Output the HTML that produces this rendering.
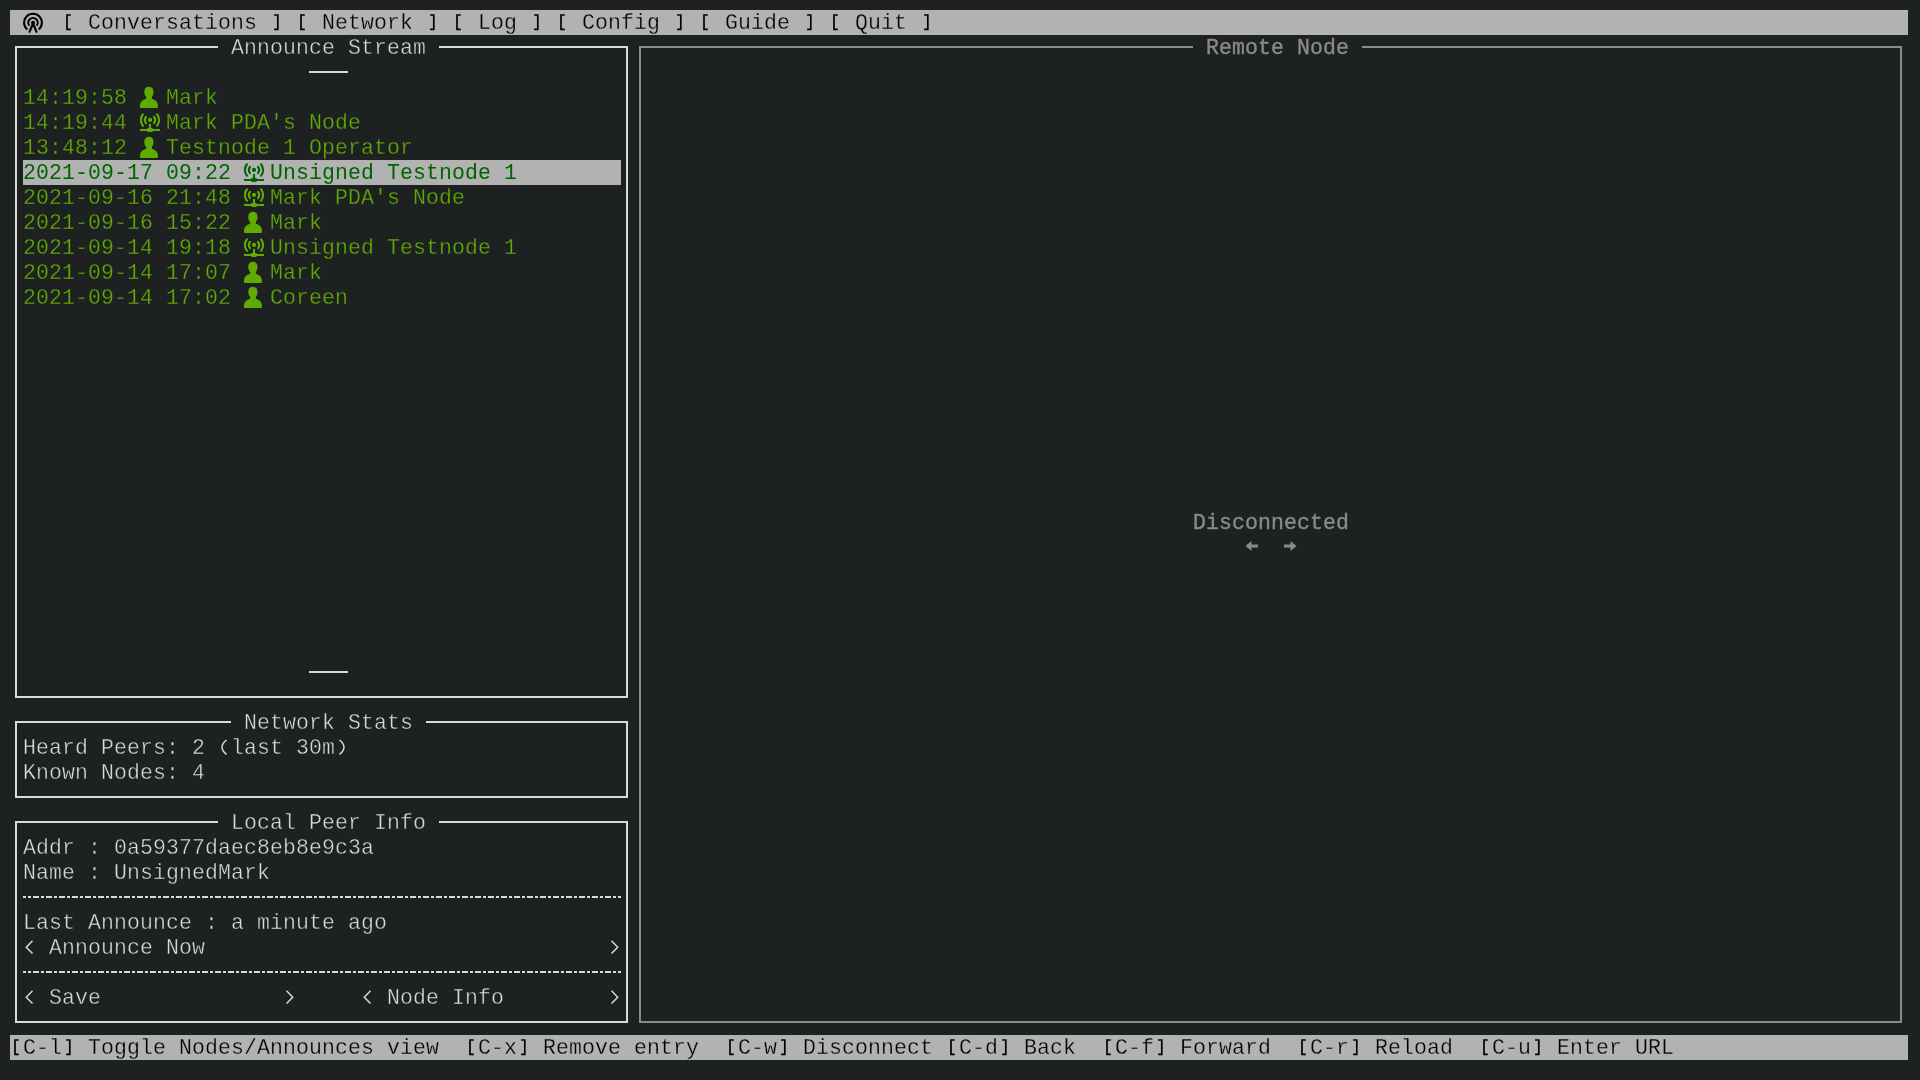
<!DOCTYPE html>
<html><head><meta charset="utf-8"><style>
html,body{margin:0;padding:0;width:1920px;height:1080px;overflow:hidden;background:#1e2122}
.t{position:absolute;white-space:pre;font-family:"Liberation Mono",monospace;font-size:21.5px;letter-spacing:0.0979px;line-height:25px;height:25px;will-change:transform}
.r{position:absolute}
.dash{background:repeating-linear-gradient(90deg,#dadcd2 0,#dadcd2 3px,transparent 3px,transparent 5px,#dadcd2 5px,#dadcd2 8px,transparent 8px,transparent 10px,#dadcd2 10px,#dadcd2 13px)}
</style></head><body>
<div class="r" style="left:10px;top:10px;width:1898px;height:25px;background:#b2b2b2"></div>
<div class="r" style="left:10px;top:1035px;width:1898px;height:25px;background:#b2b2b2"></div>
<div class="t" style="left:62px;top:11px;color:#000000;-webkit-text-stroke:0.3px #b2b2b2;">  Conversations     Network     Log     Config     Guide     Quit  </div>
<svg class="r" style="left:62px;top:10px" width="13" height="25"><path d="M8.8 5 H5 V19.4 H8.8" fill="none" stroke="#000000" stroke-width="1.70"/></svg>
<svg class="r" style="left:270px;top:10px" width="13" height="25"><path d="M4.1 5 H7.8 V19.4 H4.1" fill="none" stroke="#000000" stroke-width="1.70"/></svg>
<svg class="r" style="left:296px;top:10px" width="13" height="25"><path d="M8.8 5 H5 V19.4 H8.8" fill="none" stroke="#000000" stroke-width="1.70"/></svg>
<svg class="r" style="left:426px;top:10px" width="13" height="25"><path d="M4.1 5 H7.8 V19.4 H4.1" fill="none" stroke="#000000" stroke-width="1.70"/></svg>
<svg class="r" style="left:452px;top:10px" width="13" height="25"><path d="M8.8 5 H5 V19.4 H8.8" fill="none" stroke="#000000" stroke-width="1.70"/></svg>
<svg class="r" style="left:530px;top:10px" width="13" height="25"><path d="M4.1 5 H7.8 V19.4 H4.1" fill="none" stroke="#000000" stroke-width="1.70"/></svg>
<svg class="r" style="left:556px;top:10px" width="13" height="25"><path d="M8.8 5 H5 V19.4 H8.8" fill="none" stroke="#000000" stroke-width="1.70"/></svg>
<svg class="r" style="left:673px;top:10px" width="13" height="25"><path d="M4.1 5 H7.8 V19.4 H4.1" fill="none" stroke="#000000" stroke-width="1.70"/></svg>
<svg class="r" style="left:699px;top:10px" width="13" height="25"><path d="M8.8 5 H5 V19.4 H8.8" fill="none" stroke="#000000" stroke-width="1.70"/></svg>
<svg class="r" style="left:803px;top:10px" width="13" height="25"><path d="M4.1 5 H7.8 V19.4 H4.1" fill="none" stroke="#000000" stroke-width="1.70"/></svg>
<svg class="r" style="left:829px;top:10px" width="13" height="25"><path d="M8.8 5 H5 V19.4 H8.8" fill="none" stroke="#000000" stroke-width="1.70"/></svg>
<svg class="r" style="left:920px;top:10px" width="13" height="25"><path d="M4.1 5 H7.8 V19.4 H4.1" fill="none" stroke="#000000" stroke-width="1.70"/></svg>
<div class="t" style="left:10px;top:1036px;color:#000000;-webkit-text-stroke:0.3px #b2b2b2;"> C-l  Toggle Nodes/Announces view   C-x  Remove entry   C-w  Disconnect  C-d  Back   C-f  Forward   C-r  Reload   C-u  Enter URL</div>
<svg class="r" style="left:10px;top:1035px" width="13" height="25"><path d="M8.8 5 H5 V19.4 H8.8" fill="none" stroke="#000000" stroke-width="1.70"/></svg>
<svg class="r" style="left:62px;top:1035px" width="13" height="25"><path d="M4.1 5 H7.8 V19.4 H4.1" fill="none" stroke="#000000" stroke-width="1.70"/></svg>
<svg class="r" style="left:465px;top:1035px" width="13" height="25"><path d="M8.8 5 H5 V19.4 H8.8" fill="none" stroke="#000000" stroke-width="1.70"/></svg>
<svg class="r" style="left:517px;top:1035px" width="13" height="25"><path d="M4.1 5 H7.8 V19.4 H4.1" fill="none" stroke="#000000" stroke-width="1.70"/></svg>
<svg class="r" style="left:725px;top:1035px" width="13" height="25"><path d="M8.8 5 H5 V19.4 H8.8" fill="none" stroke="#000000" stroke-width="1.70"/></svg>
<svg class="r" style="left:777px;top:1035px" width="13" height="25"><path d="M4.1 5 H7.8 V19.4 H4.1" fill="none" stroke="#000000" stroke-width="1.70"/></svg>
<svg class="r" style="left:946px;top:1035px" width="13" height="25"><path d="M8.8 5 H5 V19.4 H8.8" fill="none" stroke="#000000" stroke-width="1.70"/></svg>
<svg class="r" style="left:998px;top:1035px" width="13" height="25"><path d="M4.1 5 H7.8 V19.4 H4.1" fill="none" stroke="#000000" stroke-width="1.70"/></svg>
<svg class="r" style="left:1102px;top:1035px" width="13" height="25"><path d="M8.8 5 H5 V19.4 H8.8" fill="none" stroke="#000000" stroke-width="1.70"/></svg>
<svg class="r" style="left:1154px;top:1035px" width="13" height="25"><path d="M4.1 5 H7.8 V19.4 H4.1" fill="none" stroke="#000000" stroke-width="1.70"/></svg>
<svg class="r" style="left:1297px;top:1035px" width="13" height="25"><path d="M8.8 5 H5 V19.4 H8.8" fill="none" stroke="#000000" stroke-width="1.70"/></svg>
<svg class="r" style="left:1349px;top:1035px" width="13" height="25"><path d="M4.1 5 H7.8 V19.4 H4.1" fill="none" stroke="#000000" stroke-width="1.70"/></svg>
<svg class="r" style="left:1479px;top:1035px" width="13" height="25"><path d="M8.8 5 H5 V19.4 H8.8" fill="none" stroke="#000000" stroke-width="1.70"/></svg>
<svg class="r" style="left:1531px;top:1035px" width="13" height="25"><path d="M4.1 5 H7.8 V19.4 H4.1" fill="none" stroke="#000000" stroke-width="1.70"/></svg>
<svg class="r" style="left:23px;top:10px" width="26" height="25" viewBox="0 0 26 25">
<g fill="none" stroke="#000" stroke-width="2.1">
<path d="M4.28 19.46 A8.9 8.9 0 1 1 15.72 19.46"/>
<path d="M6.4 15.66 A4.7 4.7 0 1 1 13.6 15.66"/>
<path d="M10 13.5 L6.2 22.6 M10 13.5 L13.8 22.6"/>
</g><circle cx="10" cy="12.64" r="1.9" fill="#000"/></svg>
<div class="r" style="left:15px;top:46px;width:2px;height:652px;background:#dadcd2"></div>
<div class="r" style="left:626px;top:46px;width:2px;height:652px;background:#dadcd2"></div>
<div class="r" style="left:15px;top:696px;width:613px;height:2px;background:#dadcd2"></div>
<div class="r" style="left:15px;top:46px;width:203px;height:2px;background:#dadcd2"></div>
<div class="r" style="left:439px;top:46px;width:189px;height:2px;background:#dadcd2"></div>
<div class="t" style="left:231px;top:36px;color:#dadcd2;-webkit-text-stroke:0.4px #1e2122;">Announce Stream</div>
<div class="r" style="left:15px;top:721px;width:2px;height:77px;background:#dadcd2"></div>
<div class="r" style="left:626px;top:721px;width:2px;height:77px;background:#dadcd2"></div>
<div class="r" style="left:15px;top:796px;width:613px;height:2px;background:#dadcd2"></div>
<div class="r" style="left:15px;top:721px;width:216px;height:2px;background:#dadcd2"></div>
<div class="r" style="left:426px;top:721px;width:202px;height:2px;background:#dadcd2"></div>
<div class="t" style="left:244px;top:711px;color:#dadcd2;-webkit-text-stroke:0.4px #1e2122;">Network Stats</div>
<div class="r" style="left:15px;top:821px;width:2px;height:202px;background:#dadcd2"></div>
<div class="r" style="left:626px;top:821px;width:2px;height:202px;background:#dadcd2"></div>
<div class="r" style="left:15px;top:1021px;width:613px;height:2px;background:#dadcd2"></div>
<div class="r" style="left:15px;top:821px;width:203px;height:2px;background:#dadcd2"></div>
<div class="r" style="left:439px;top:821px;width:189px;height:2px;background:#dadcd2"></div>
<div class="t" style="left:231px;top:811px;color:#dadcd2;-webkit-text-stroke:0.4px #1e2122;">Local Peer Info</div>
<div class="r" style="left:639px;top:46px;width:2px;height:977px;background:#8a8a8a"></div>
<div class="r" style="left:1900px;top:46px;width:2px;height:977px;background:#8a8a8a"></div>
<div class="r" style="left:639px;top:1021px;width:1263px;height:2px;background:#8a8a8a"></div>
<div class="r" style="left:639px;top:46px;width:554px;height:2px;background:#8a8a8a"></div>
<div class="r" style="left:1362px;top:46px;width:540px;height:2px;background:#8a8a8a"></div>
<div class="t" style="left:1206px;top:36px;color:#8a8a8a;-webkit-text-stroke:0.35px #8a8a8a;">Remote Node</div>
<div class="r" style="left:309px;top:71px;width:39px;height:2px;background:#dadcd2"></div>
<div class="r" style="left:309px;top:671px;width:39px;height:2px;background:#dadcd2"></div>
<div class="r" style="left:23px;top:160px;width:598px;height:25px;background:#b2b2b2"></div>
<div class="t" style="left:23px;top:86px;color:#60ab02;-webkit-text-stroke:0.3px #1e2122;">14:19:58</div>
<svg class="r" style="left:140px;top:85px" width="26" height="25" viewBox="0 0 26 25"><g fill="#60ab02">
<path d="M4.3 6.8 C4.3 3.4 6.3 1.85 8.9 1.85 C11.5 1.85 13.5 3.4 13.5 6.8 C13.5 10.2 12.5 12.6 8.9 12.6 C5.3 12.6 4.3 10.2 4.3 6.8 Z"/>
<rect x="6.1" y="10" width="5.8" height="5"/>
<path d="M0.5 23 Q0 23 0 22 L0 20.5 C0 16.5 3.5 14.3 6.5 13.8 L11.4 13.8 C14.4 14.3 17.9 16.5 17.9 20.5 L17.9 22 Q17.9 23 17.4 23 Z"/>
</g></svg>
<div class="t" style="left:166px;top:86px;color:#60ab02;-webkit-text-stroke:0.3px #1e2122;">Mark</div>
<div class="t" style="left:23px;top:111px;color:#60ab02;-webkit-text-stroke:0.3px #1e2122;">14:19:44</div>
<svg class="r" style="left:140px;top:110px" width="26" height="25" viewBox="0 0 26 25"><g fill="none" stroke="#60ab02" stroke-width="2.1" stroke-linecap="round">
<path d="M2.93 4.27 A9.1 9.1 0 0 0 2.93 15.73"/>
<path d="M17.07 4.27 A9.1 9.1 0 0 1 17.07 15.73"/>
<path d="M5.93 6.93 A5.1 5.1 0 0 0 5.93 13.07"/>
<path d="M14.07 6.93 A5.1 5.1 0 0 1 14.07 13.07"/>
</g><g fill="#60ab02"><circle cx="10" cy="9.95" r="2.1"/><rect x="8.95" y="13.9" width="2.1" height="6"/>
<rect x="0" y="19" width="20" height="2"/><rect x="6.9" y="17.9" width="6.1" height="4" rx="1.3"/></g></svg>
<div class="t" style="left:166px;top:111px;color:#60ab02;-webkit-text-stroke:0.3px #1e2122;">Mark PDA's Node</div>
<div class="t" style="left:23px;top:136px;color:#60ab02;-webkit-text-stroke:0.3px #1e2122;">13:48:12</div>
<svg class="r" style="left:140px;top:135px" width="26" height="25" viewBox="0 0 26 25"><g fill="#60ab02">
<path d="M4.3 6.8 C4.3 3.4 6.3 1.85 8.9 1.85 C11.5 1.85 13.5 3.4 13.5 6.8 C13.5 10.2 12.5 12.6 8.9 12.6 C5.3 12.6 4.3 10.2 4.3 6.8 Z"/>
<rect x="6.1" y="10" width="5.8" height="5"/>
<path d="M0.5 23 Q0 23 0 22 L0 20.5 C0 16.5 3.5 14.3 6.5 13.8 L11.4 13.8 C14.4 14.3 17.9 16.5 17.9 20.5 L17.9 22 Q17.9 23 17.4 23 Z"/>
</g></svg>
<div class="t" style="left:166px;top:136px;color:#60ab02;-webkit-text-stroke:0.3px #1e2122;">Testnode 1 Operator</div>
<div class="t" style="left:23px;top:161px;color:#006400;">2021-09-17 09:22</div>
<svg class="r" style="left:244px;top:160px" width="26" height="25" viewBox="0 0 26 25"><g fill="none" stroke="#006400" stroke-width="2.1" stroke-linecap="round">
<path d="M2.93 4.27 A9.1 9.1 0 0 0 2.93 15.73"/>
<path d="M17.07 4.27 A9.1 9.1 0 0 1 17.07 15.73"/>
<path d="M5.93 6.93 A5.1 5.1 0 0 0 5.93 13.07"/>
<path d="M14.07 6.93 A5.1 5.1 0 0 1 14.07 13.07"/>
</g><g fill="#006400"><circle cx="10" cy="9.95" r="2.1"/><rect x="8.95" y="13.9" width="2.1" height="6"/>
<rect x="0" y="19" width="20" height="2"/><rect x="6.9" y="17.9" width="6.1" height="4" rx="1.3"/></g></svg>
<div class="t" style="left:270px;top:161px;color:#006400;">Unsigned Testnode 1</div>
<div class="t" style="left:23px;top:186px;color:#60ab02;-webkit-text-stroke:0.3px #1e2122;">2021-09-16 21:48</div>
<svg class="r" style="left:244px;top:185px" width="26" height="25" viewBox="0 0 26 25"><g fill="none" stroke="#60ab02" stroke-width="2.1" stroke-linecap="round">
<path d="M2.93 4.27 A9.1 9.1 0 0 0 2.93 15.73"/>
<path d="M17.07 4.27 A9.1 9.1 0 0 1 17.07 15.73"/>
<path d="M5.93 6.93 A5.1 5.1 0 0 0 5.93 13.07"/>
<path d="M14.07 6.93 A5.1 5.1 0 0 1 14.07 13.07"/>
</g><g fill="#60ab02"><circle cx="10" cy="9.95" r="2.1"/><rect x="8.95" y="13.9" width="2.1" height="6"/>
<rect x="0" y="19" width="20" height="2"/><rect x="6.9" y="17.9" width="6.1" height="4" rx="1.3"/></g></svg>
<div class="t" style="left:270px;top:186px;color:#60ab02;-webkit-text-stroke:0.3px #1e2122;">Mark PDA's Node</div>
<div class="t" style="left:23px;top:211px;color:#60ab02;-webkit-text-stroke:0.3px #1e2122;">2021-09-16 15:22</div>
<svg class="r" style="left:244px;top:210px" width="26" height="25" viewBox="0 0 26 25"><g fill="#60ab02">
<path d="M4.3 6.8 C4.3 3.4 6.3 1.85 8.9 1.85 C11.5 1.85 13.5 3.4 13.5 6.8 C13.5 10.2 12.5 12.6 8.9 12.6 C5.3 12.6 4.3 10.2 4.3 6.8 Z"/>
<rect x="6.1" y="10" width="5.8" height="5"/>
<path d="M0.5 23 Q0 23 0 22 L0 20.5 C0 16.5 3.5 14.3 6.5 13.8 L11.4 13.8 C14.4 14.3 17.9 16.5 17.9 20.5 L17.9 22 Q17.9 23 17.4 23 Z"/>
</g></svg>
<div class="t" style="left:270px;top:211px;color:#60ab02;-webkit-text-stroke:0.3px #1e2122;">Mark</div>
<div class="t" style="left:23px;top:236px;color:#60ab02;-webkit-text-stroke:0.3px #1e2122;">2021-09-14 19:18</div>
<svg class="r" style="left:244px;top:235px" width="26" height="25" viewBox="0 0 26 25"><g fill="none" stroke="#60ab02" stroke-width="2.1" stroke-linecap="round">
<path d="M2.93 4.27 A9.1 9.1 0 0 0 2.93 15.73"/>
<path d="M17.07 4.27 A9.1 9.1 0 0 1 17.07 15.73"/>
<path d="M5.93 6.93 A5.1 5.1 0 0 0 5.93 13.07"/>
<path d="M14.07 6.93 A5.1 5.1 0 0 1 14.07 13.07"/>
</g><g fill="#60ab02"><circle cx="10" cy="9.95" r="2.1"/><rect x="8.95" y="13.9" width="2.1" height="6"/>
<rect x="0" y="19" width="20" height="2"/><rect x="6.9" y="17.9" width="6.1" height="4" rx="1.3"/></g></svg>
<div class="t" style="left:270px;top:236px;color:#60ab02;-webkit-text-stroke:0.3px #1e2122;">Unsigned Testnode 1</div>
<div class="t" style="left:23px;top:261px;color:#60ab02;-webkit-text-stroke:0.3px #1e2122;">2021-09-14 17:07</div>
<svg class="r" style="left:244px;top:260px" width="26" height="25" viewBox="0 0 26 25"><g fill="#60ab02">
<path d="M4.3 6.8 C4.3 3.4 6.3 1.85 8.9 1.85 C11.5 1.85 13.5 3.4 13.5 6.8 C13.5 10.2 12.5 12.6 8.9 12.6 C5.3 12.6 4.3 10.2 4.3 6.8 Z"/>
<rect x="6.1" y="10" width="5.8" height="5"/>
<path d="M0.5 23 Q0 23 0 22 L0 20.5 C0 16.5 3.5 14.3 6.5 13.8 L11.4 13.8 C14.4 14.3 17.9 16.5 17.9 20.5 L17.9 22 Q17.9 23 17.4 23 Z"/>
</g></svg>
<div class="t" style="left:270px;top:261px;color:#60ab02;-webkit-text-stroke:0.3px #1e2122;">Mark</div>
<div class="t" style="left:23px;top:286px;color:#60ab02;-webkit-text-stroke:0.3px #1e2122;">2021-09-14 17:02</div>
<svg class="r" style="left:244px;top:285px" width="26" height="25" viewBox="0 0 26 25"><g fill="#60ab02">
<path d="M4.3 6.8 C4.3 3.4 6.3 1.85 8.9 1.85 C11.5 1.85 13.5 3.4 13.5 6.8 C13.5 10.2 12.5 12.6 8.9 12.6 C5.3 12.6 4.3 10.2 4.3 6.8 Z"/>
<rect x="6.1" y="10" width="5.8" height="5"/>
<path d="M0.5 23 Q0 23 0 22 L0 20.5 C0 16.5 3.5 14.3 6.5 13.8 L11.4 13.8 C14.4 14.3 17.9 16.5 17.9 20.5 L17.9 22 Q17.9 23 17.4 23 Z"/>
</g></svg>
<div class="t" style="left:270px;top:286px;color:#60ab02;-webkit-text-stroke:0.3px #1e2122;">Coreen</div>
<div class="t" style="left:23px;top:736px;color:#dadcd2;-webkit-text-stroke:0.4px #1e2122;">Heard Peers: 2  last 30m</div>
<svg class="r" style="left:218px;top:735px" width="13" height="25"><path d="M8.6 5 C2.5 9.5 2.5 14.9 8.6 19.4" fill="none" stroke="#dadcd2" stroke-width="1.5"/></svg>
<svg class="r" style="left:335px;top:735px" width="13" height="25"><path d="M4.4 5 C10.5 9.5 10.5 14.9 4.4 19.4" fill="none" stroke="#dadcd2" stroke-width="1.5"/></svg>
<div class="t" style="left:23px;top:761px;color:#dadcd2;-webkit-text-stroke:0.4px #1e2122;">Known Nodes: 4</div>
<div class="t" style="left:23px;top:836px;color:#dadcd2;-webkit-text-stroke:0.4px #1e2122;">Addr : 0a59377daec8eb8e9c3a</div>
<div class="t" style="left:23px;top:861px;color:#dadcd2;-webkit-text-stroke:0.4px #1e2122;">Name : UnsignedMark</div>
<div class="t" style="left:23px;top:911px;color:#dadcd2;-webkit-text-stroke:0.4px #1e2122;">Last Announce : a minute ago</div>
<div class="t" style="left:49px;top:936px;color:#dadcd2;-webkit-text-stroke:0.4px #1e2122;">Announce Now</div>
<svg class="r" style="left:23px;top:935px" width="13" height="25"><polyline points="9.5,5.8 3.25,12.3 9.5,18.5" fill="none" stroke="#dadcd2" stroke-width="1.45"/></svg>
<svg class="r" style="left:608px;top:935px" width="13" height="25"><polyline points="3.5,5.8 9.75,12.3 3.5,18.5" fill="none" stroke="#dadcd2" stroke-width="1.45"/></svg>
<div class="t" style="left:49px;top:986px;color:#dadcd2;-webkit-text-stroke:0.4px #1e2122;">Save</div>
<svg class="r" style="left:23px;top:985px" width="13" height="25"><polyline points="9.5,5.8 3.25,12.3 9.5,18.5" fill="none" stroke="#dadcd2" stroke-width="1.45"/></svg>
<svg class="r" style="left:283px;top:985px" width="13" height="25"><polyline points="3.5,5.8 9.75,12.3 3.5,18.5" fill="none" stroke="#dadcd2" stroke-width="1.45"/></svg>
<div class="t" style="left:387px;top:986px;color:#dadcd2;-webkit-text-stroke:0.4px #1e2122;">Node Info</div>
<svg class="r" style="left:361px;top:985px" width="13" height="25"><polyline points="9.5,5.8 3.25,12.3 9.5,18.5" fill="none" stroke="#dadcd2" stroke-width="1.45"/></svg>
<svg class="r" style="left:608px;top:985px" width="13" height="25"><polyline points="3.5,5.8 9.75,12.3 3.5,18.5" fill="none" stroke="#dadcd2" stroke-width="1.45"/></svg>
<div class="r dash" style="left:23px;top:896px;width:598px;height:2px"></div>
<div class="r dash" style="left:23px;top:971px;width:598px;height:2px"></div>
<div class="t" style="left:1193px;top:511px;color:#8a8a8a;-webkit-text-stroke:0.35px #8a8a8a;">Disconnected</div>
<svg class="r" style="left:1245px;top:535px" width="52" height="25" viewBox="0 0 52 25"><g fill="#8a8a8a"><path d="M0.5 11 L6.5 6 L6.5 9.5 L13 9.5 L13 12.5 L6.5 12.5 L6.5 16 Z"/><path d="M51.5 11 L45.5 6 L45.5 9.5 L39 9.5 L39 12.5 L45.5 12.5 L45.5 16 Z"/></g></svg>
</body></html>
